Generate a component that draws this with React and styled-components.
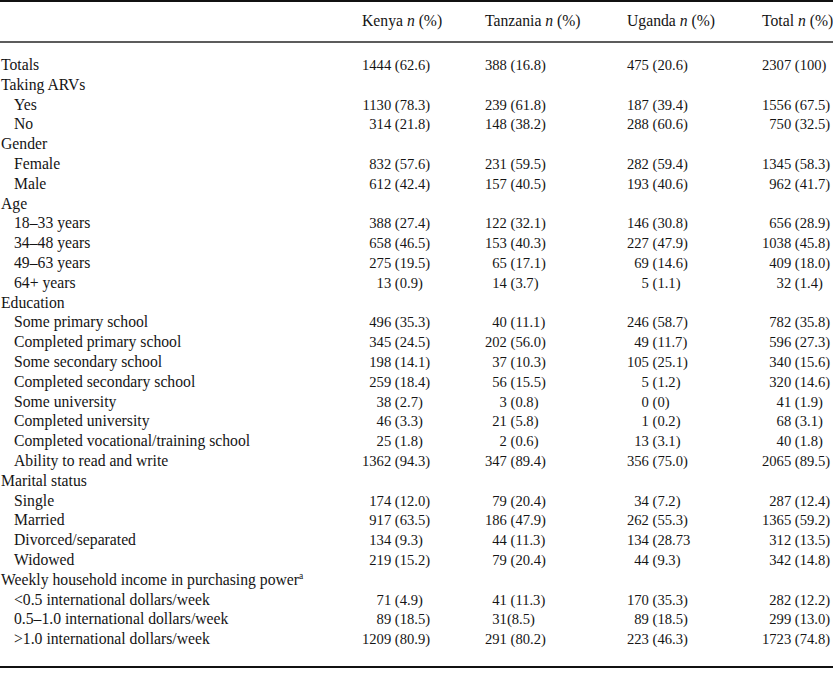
import React from "react";
import styled, { createGlobalStyle } from "styled-components";

const Global = createGlobalStyle`
  html, body { margin: 0; padding: 0; background: #fff; }
  body { font-family: "Liberation Serif", "Times New Roman", serif; color: #151515; }
`;

const COLS = "362px 123px 142px 135px 1fr";
const COUNT_W = [29.2, 21.9, 21.9, 29.2];

const Table = styled.div`
  width: 833px;
  border-top: 2px solid #111;
  border-bottom: 2px solid #111;
  box-sizing: border-box;
`;

const HeadRow = styled.div`
  display: grid;
  grid-template-columns: ${COLS};
  padding: 9px 0 10px;
  border-bottom: 2px solid #5c5c5c;
  font-size: 15.7px;
  line-height: 20px;
`;

const HeadCell = styled.div`
  white-space: nowrap;
`;

const Ital = styled.i`
  font-style: italic;
`;

const Body = styled.div`
  padding: 12px 0 17px;
`;

const Row = styled.div`
  display: grid;
  grid-template-columns: ${COLS};
  align-items: baseline;
  height: 19.8px;
`;

const Label = styled.div`
  font-size: 15.7px;
  line-height: 19.8px;
  white-space: nowrap;
  padding-left: ${(p) => (p.$sub ? "14px" : "1px")};
`;

const Sup = styled.sup`
  font-size: 9.5px;
  vertical-align: 6px;
  line-height: 0;
`;

const Data = styled.div`
  font-size: 14.6px;
  line-height: 19.8px;
  white-space: nowrap;
`;

const Count = styled.span`
  display: inline-block;
  text-align: right;
  width: ${(p) => p.$w}px;
`;

const rows = [
  { label: "Totals", v: ["1444 (62.6)", "388 (16.8)", "475 (20.6)", "2307 (100)"] },
  { label: "Taking ARVs" },
  { label: "Yes", sub: true, v: ["1130 (78.3)", "239 (61.8)", "187 (39.4)", "1556 (67.5)"] },
  { label: "No", sub: true, v: ["314 (21.8)", "148 (38.2)", "288 (60.6)", "750 (32.5)"] },
  { label: "Gender" },
  { label: "Female", sub: true, v: ["832 (57.6)", "231 (59.5)", "282 (59.4)", "1345 (58.3)"] },
  { label: "Male", sub: true, v: ["612 (42.4)", "157 (40.5)", "193 (40.6)", "962 (41.7)"] },
  { label: "Age" },
  { label: "18–33 years", sub: true, v: ["388 (27.4)", "122 (32.1)", "146 (30.8)", "656 (28.9)"] },
  { label: "34–48 years", sub: true, v: ["658 (46.5)", "153 (40.3)", "227 (47.9)", "1038 (45.8)"] },
  { label: "49–63 years", sub: true, v: ["275 (19.5)", "65 (17.1)", "69 (14.6)", "409 (18.0)"] },
  { label: "64+ years", sub: true, v: ["13 (0.9)", "14 (3.7)", "5 (1.1)", "32 (1.4)"] },
  { label: "Education" },
  { label: "Some primary school", sub: true, v: ["496 (35.3)", "40 (11.1)", "246 (58.7)", "782 (35.8)"] },
  { label: "Completed primary school", sub: true, v: ["345 (24.5)", "202 (56.0)", "49 (11.7)", "596 (27.3)"] },
  { label: "Some secondary school", sub: true, v: ["198 (14.1)", "37 (10.3)", "105 (25.1)", "340 (15.6)"] },
  { label: "Completed secondary school", sub: true, v: ["259 (18.4)", "56 (15.5)", "5 (1.2)", "320 (14.6)"] },
  { label: "Some university", sub: true, v: ["38 (2.7)", "3 (0.8)", "0 (0)", "41 (1.9)"] },
  { label: "Completed university", sub: true, v: ["46 (3.3)", "21 (5.8)", "1 (0.2)", "68 (3.1)"] },
  { label: "Completed vocational/training school", sub: true, v: ["25 (1.8)", "2 (0.6)", "13 (3.1)", "40 (1.8)"] },
  { label: "Ability to read and write", sub: true, v: ["1362 (94.3)", "347 (89.4)", "356 (75.0)", "2065 (89.5)"] },
  { label: "Marital status" },
  { label: "Single", sub: true, v: ["174 (12.0)", "79 (20.4)", "34 (7.2)", "287 (12.4)"] },
  { label: "Married", sub: true, v: ["917 (63.5)", "186 (47.9)", "262 (55.3)", "1365 (59.2)"] },
  { label: "Divorced/separated", sub: true, v: ["134 (9.3)", "44 (11.3)", "134 (28.73", "312 (13.5)"] },
  { label: "Widowed", sub: true, v: ["219 (15.2)", "79 (20.4)", "44 (9.3)", "342 (14.8)"] },
  { label: "Weekly household income in purchasing power", sup: "a" },
  { label: "<0.5 international dollars/week", sub: true, v: ["71 (4.9)", "41 (11.3)", "170 (35.3)", "282 (12.2)"] },
  { label: "0.5–1.0 international dollars/week", sub: true, v: ["89 (18.5)", "31(8.5)", "89 (18.5)", "299 (13.0)"] },
  { label: ">1.0 international dollars/week", sub: true, v: ["1209 (80.9)", "291 (80.2)", "223 (46.3)", "1723 (74.8)"] },
];

function Value({ text, w }) {
  const idx = text.indexOf("(");
  const count = text.slice(0, idx).trimEnd();
  const rest = text.slice(idx);
  const space = text[idx - 1] === " ";
  return (
    <Data>
      <Count $w={w}>{count}</Count>
      {space ? " " : ""}
      {rest}
    </Data>
  );
}

const heads = ["Kenya", "Tanzania", "Uganda", "Total"];

export default function App() {
  return (
    <>
      <Global />
      <Table>
        <HeadRow>
          <HeadCell />
          {heads.map((h) => (
            <HeadCell key={h}>
              {h} <Ital>n</Ital> (%)
            </HeadCell>
          ))}
        </HeadRow>
        <Body>
          {rows.map((r, i) => (
            <Row key={i}>
              <Label $sub={r.sub}>
                {r.label}
                {r.sup && <Sup>{r.sup}</Sup>}
              </Label>
              {r.v
                ? r.v.map((t, j) => <Value key={j} text={t} w={COUNT_W[j]} />)
                : null}
            </Row>
          ))}
        </Body>
      </Table>
    </>
  );
}
